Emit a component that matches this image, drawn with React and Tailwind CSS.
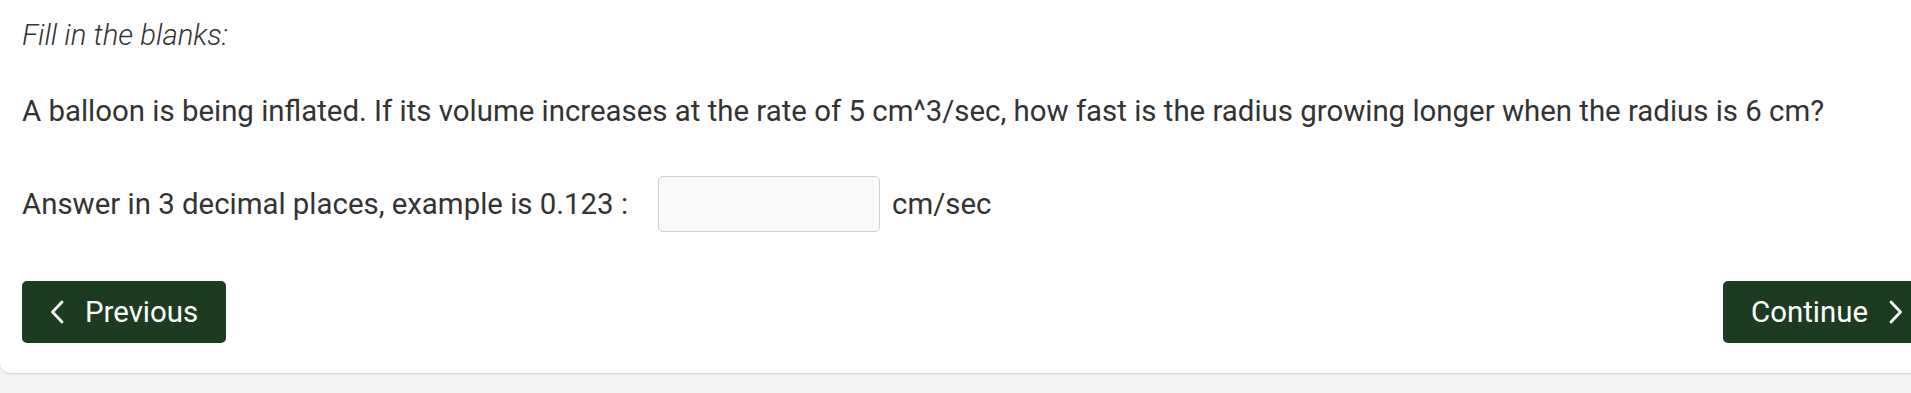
import { useState } from "react";

const Chevron = ({ dir = "left" }) => (
    <svg width="14" height="24" viewBox="0 0 14 24" fill="none" className="shrink-0">
        <path
            d={dir === "left" ? "M12 2 L2.5 12 L12 22" : "M2 2 L11.5 12 L2 22"}
            stroke="currentColor"
            strokeWidth="2.8"
            strokeLinecap="round"
            strokeLinejoin="round"
        />
    </svg>
);

const App = () => {
    const [answer, setAnswer] = useState("");

    const btnClass =
        "flex items-center gap-[21px] h-[62px] px-[28px] rounded-[5px] bg-[#1c3b21] text-white text-[29.4px] leading-[34px]";

    return (
        <div className="w-[1911px] h-[393px] overflow-hidden bg-[#f3f3f3] font-['Roboto',sans-serif] text-[#333333]">
            <div className="w-[1953px] bg-white rounded-b-[10px] shadow-[0_1px_2px_rgba(0,0,0,0.15)] px-[22px] pt-[18px] pb-[30px]">
                <p className="text-[29.4px] leading-[34px] italic font-light">Fill in the blanks:</p>

                <p className="mt-[42px] text-[29.4px] leading-[34px]">
                    A balloon is being inflated. If its volume increases at the rate of 5 cm^3/sec, how fast is the
                    radius growing longer when the radius is 6 cm?
                </p>

                <div className="mt-[48px] flex items-center text-[29.4px] leading-[34px]">
                    <span>Answer in 3 decimal places, example is 0.123 :</span>
                    <input
                        type="text"
                        value={answer}
                        onChange={(event) => setAnswer(event.target.value)}
                        className="ml-[30px] w-[222px] h-[56px] rounded-[5px] border border-[#cfcfcf] bg-[#fafafa] px-3 text-[29px] focus:outline-none"
                    />
                    <span className="ml-[12px]">cm/sec</span>
                </div>

                <div className="mt-[49px] flex items-center justify-between">
                    <button className={btnClass}>
                        <Chevron dir="left" />
                        <span>Previous</span>
                    </button>
                    <button className={btnClass}>
                        <span>Continue</span>
                        <Chevron dir="right" />
                    </button>
                </div>
            </div>
        </div>
    );
};

export default App;
